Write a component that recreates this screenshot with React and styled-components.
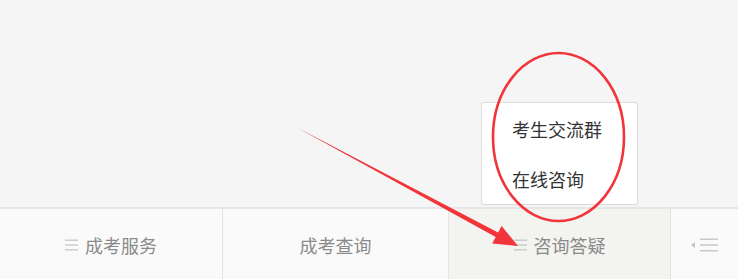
import React from "react";
import styled, { createGlobalStyle } from "styled-components";

const GlobalStyle = createGlobalStyle`
  html, body {
    margin: 0;
    padding: 0;
    background: #f5f5f5;
    font-family: "Noto Sans CJK SC", "Noto Sans", sans-serif;
  }
  * {
    box-sizing: border-box;
  }
`;

const MenuIcon = ({ width = 13 }) => (
  <svg width={width} height="12" viewBox={`0 0 ${width} 12`}>
    <rect x="0" y="0.5" width={width} height="1.4" fill="#c9c9c9" />
    <rect x="0" y="5.3" width={width} height="1.4" fill="#c9c9c9" />
    <rect x="0" y="10.1" width={width} height="1.4" fill="#c9c9c9" />
  </svg>
);

const CollapseIcon = () => (
  <svg width="28" height="14" viewBox="0 0 28 14">
    <polygon points="0,7 4,4 4,10" fill="#c4c4c4" />
    <rect x="9" y="0.5" width="18" height="1.5" fill="#c9c9c9" />
    <rect x="9" y="6.3" width="18" height="1.5" fill="#c9c9c9" />
    <rect x="9" y="12" width="18" height="1.5" fill="#c9c9c9" />
  </svg>
);

const App = () => {
  return (
    <Page>
      <GlobalStyle />
      <Spacer />
      <TabBar>
        <Tab>
          <MenuIcon />
          <span>成考服务</span>
        </Tab>
        <Tab>
          <span>成考查询</span>
        </Tab>
        <Tab $active>
          <MenuIcon />
          <span>咨询答疑</span>
          <Popup>
            <PopupItem>考生交流群</PopupItem>
            <PopupItem>在线咨询</PopupItem>
          </Popup>
        </Tab>
        <Tab>
          <CollapseIcon />
        </Tab>
      </TabBar>
      <Annotation viewBox="0 0 738 279" width="738" height="279">
        <ellipse
          cx="558.5"
          cy="137"
          rx="65.5"
          ry="84"
          fill="none"
          stroke="#f1353b"
          strokeWidth="2.6"
        />
        <polygon
          points="296,127 498.1,232.5 501.6,225.9 518,246 492.2,243.5 495.7,236.9"
          fill="#f1353b"
        />
      </Annotation>
    </Page>
  );
};

const Page = styled.div`
  position: relative;
  width: 738px;
  height: 279px;
  display: flex;
  flex-direction: column;
  overflow: hidden;
`;

const Spacer = styled.div`
  flex: 1;
`;

const TabBar = styled.nav`
  height: 72px;
  border-top: 2px solid #e6e6e6;
  display: grid;
  grid-template-columns: 222px 226px 222px 1fr;
  background: #fafafa;
`;

const Tab = styled.div`
  position: relative;
  display: flex;
  align-items: center;
  justify-content: center;
  gap: 7px;
  padding-top: 2px;
  font-size: 18px;
  color: #8a8a8a;
  background: ${({ $active }) => ($active ? "#f3f3ef" : "#fafafa")};
  & + & {
    border-left: 1px solid #e3e3e3;
  }
`;

const Popup = styled.div`
  position: absolute;
  left: 32px;
  bottom: calc(100% + 4px);
  width: 157px;
  padding: 1px 0 0;
  background: #fff;
  border: 1px solid #dcdcdc;
  border-radius: 3px;
  box-shadow: 0 0 2px rgba(0, 0, 0, 0.04);
`;

const PopupItem = styled.div`
  height: 50px;
  line-height: 50px;
  padding-left: 30px;
  font-size: 18px;
  color: #333;
  white-space: nowrap;
`;

const Annotation = styled.svg`
  position: absolute;
  left: 0;
  top: 0;
  pointer-events: none;
`;

export default App;
